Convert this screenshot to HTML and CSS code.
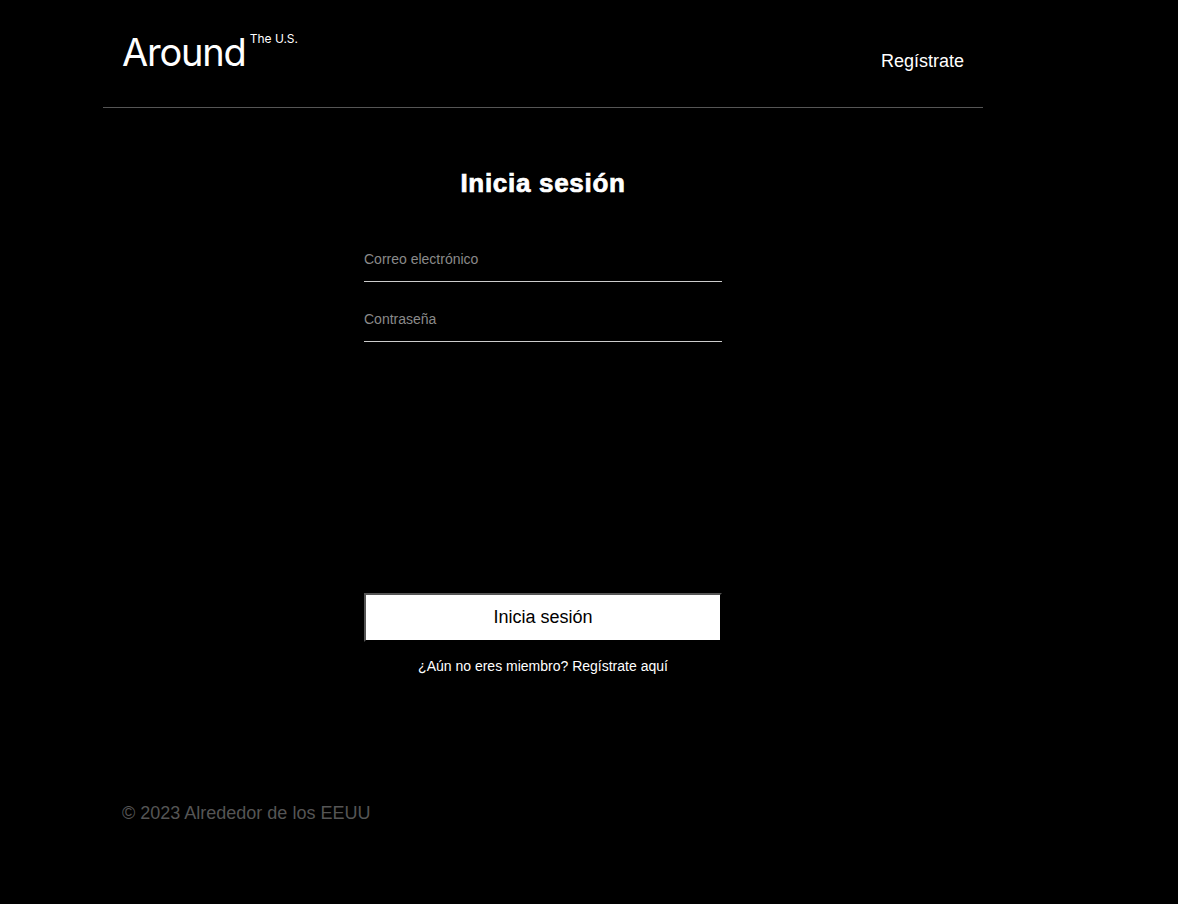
FILE: index.html
```html
<!DOCTYPE html>
<html lang="es">
<head>
<meta charset="utf-8">
<title>Around The U.S.</title>
<link rel="stylesheet" href="styles.css">
</head>
<body>
<div class="page">
  <header class="header">
    <div class="logo">
      <span class="logo-main">Around</span>
      <span class="logo-sub">The U.S.</span>
    </div>
    <a class="header-link" href="#">Regístrate</a>
  </header>
  <main class="auth">
    <h1 class="auth-title">Inicia sesión</h1>
    <form class="auth-form">
      <input class="auth-input" type="email" placeholder="Correo electrónico">
      <input class="auth-input" type="password" placeholder="Contraseña">
      <button class="auth-button" type="button">Inicia sesión</button>
      <a class="auth-link" href="#">¿Aún no eres miembro? Regístrate aquí</a>
    </form>
  </main>
  <footer class="footer">© 2023 Alrededor de los EEUU</footer>
</div>
</body>
</html>
```
FILE: styles.css
```css
html, body {
  margin: 0;
  padding: 0;
  background: #000;
}
body {
  font-family: "Liberation Sans", Arial, sans-serif;
  color: #fff;
  min-height: 904px;
}
.page {
  width: 880px;
  margin-left: 103px;
}
.header {
  display: flex;
  justify-content: space-between;
  align-items: flex-start;
  height: 107px;
  border-bottom: 1px solid #555;
  padding: 0 19px;
  box-sizing: content-box;
}
.logo {
  display: flex;
  align-items: flex-start;
  padding-top: 29px;
  font-family: "Inter", "Roboto", sans-serif;
}
.logo-main {
  font-size: 38px;
  line-height: 47px;
  letter-spacing: -1.2px;
}
.logo-sub {
  font-size: 12px;
  line-height: 14px;
  margin-left: 4px;
  margin-top: 3px;
}
.header-link {
  color: #fff;
  text-decoration: none;
  font-size: 18px;
  line-height: 21px;
  margin-top: 51px;
}
.auth {
  display: flex;
  flex-direction: column;
  align-items: center;
}
.auth-title {
  margin: 60px 0 0;
  font-size: 26px;
  line-height: 30px;
  font-weight: 900;
  letter-spacing: 0.7px;
  -webkit-text-stroke: 0.7px #fff;
}
.auth-form {
  width: 358px;
  display: flex;
  flex-direction: column;
  margin-top: 51px;
}
.auth-input {
  background: transparent;
  border: none;
  border-bottom: 1px solid #ccc;
  color: #fff;
  font-family: "Liberation Sans", Arial, sans-serif;
  font-size: 14px;
  padding: 0 0 13px;
  margin: 0 0 27px;
  height: 33px;
  box-sizing: border-box;
  outline: none;
}
.auth-input::placeholder {
  color: #8a8a8a;
}
.auth-button {
  margin-top: 224px;
  width: 358px;
  height: 49px;
  background: #fff;
  color: #000;
  font-family: "Liberation Sans", Arial, sans-serif;
  font-size: 18px;
  border-style: solid;
  border-width: 2px;
  border-color: #555 #000 #000 #555;
  padding: 0;
}
.auth-link {
  align-self: center;
  color: #fff;
  text-decoration: none;
  font-size: 14px;
  line-height: 16px;
  margin-top: 16px;
}
.footer {
  margin-top: 129px;
  padding-left: 19px;
  color: #555;
  font-size: 18px;
  line-height: 21px;
}
```
